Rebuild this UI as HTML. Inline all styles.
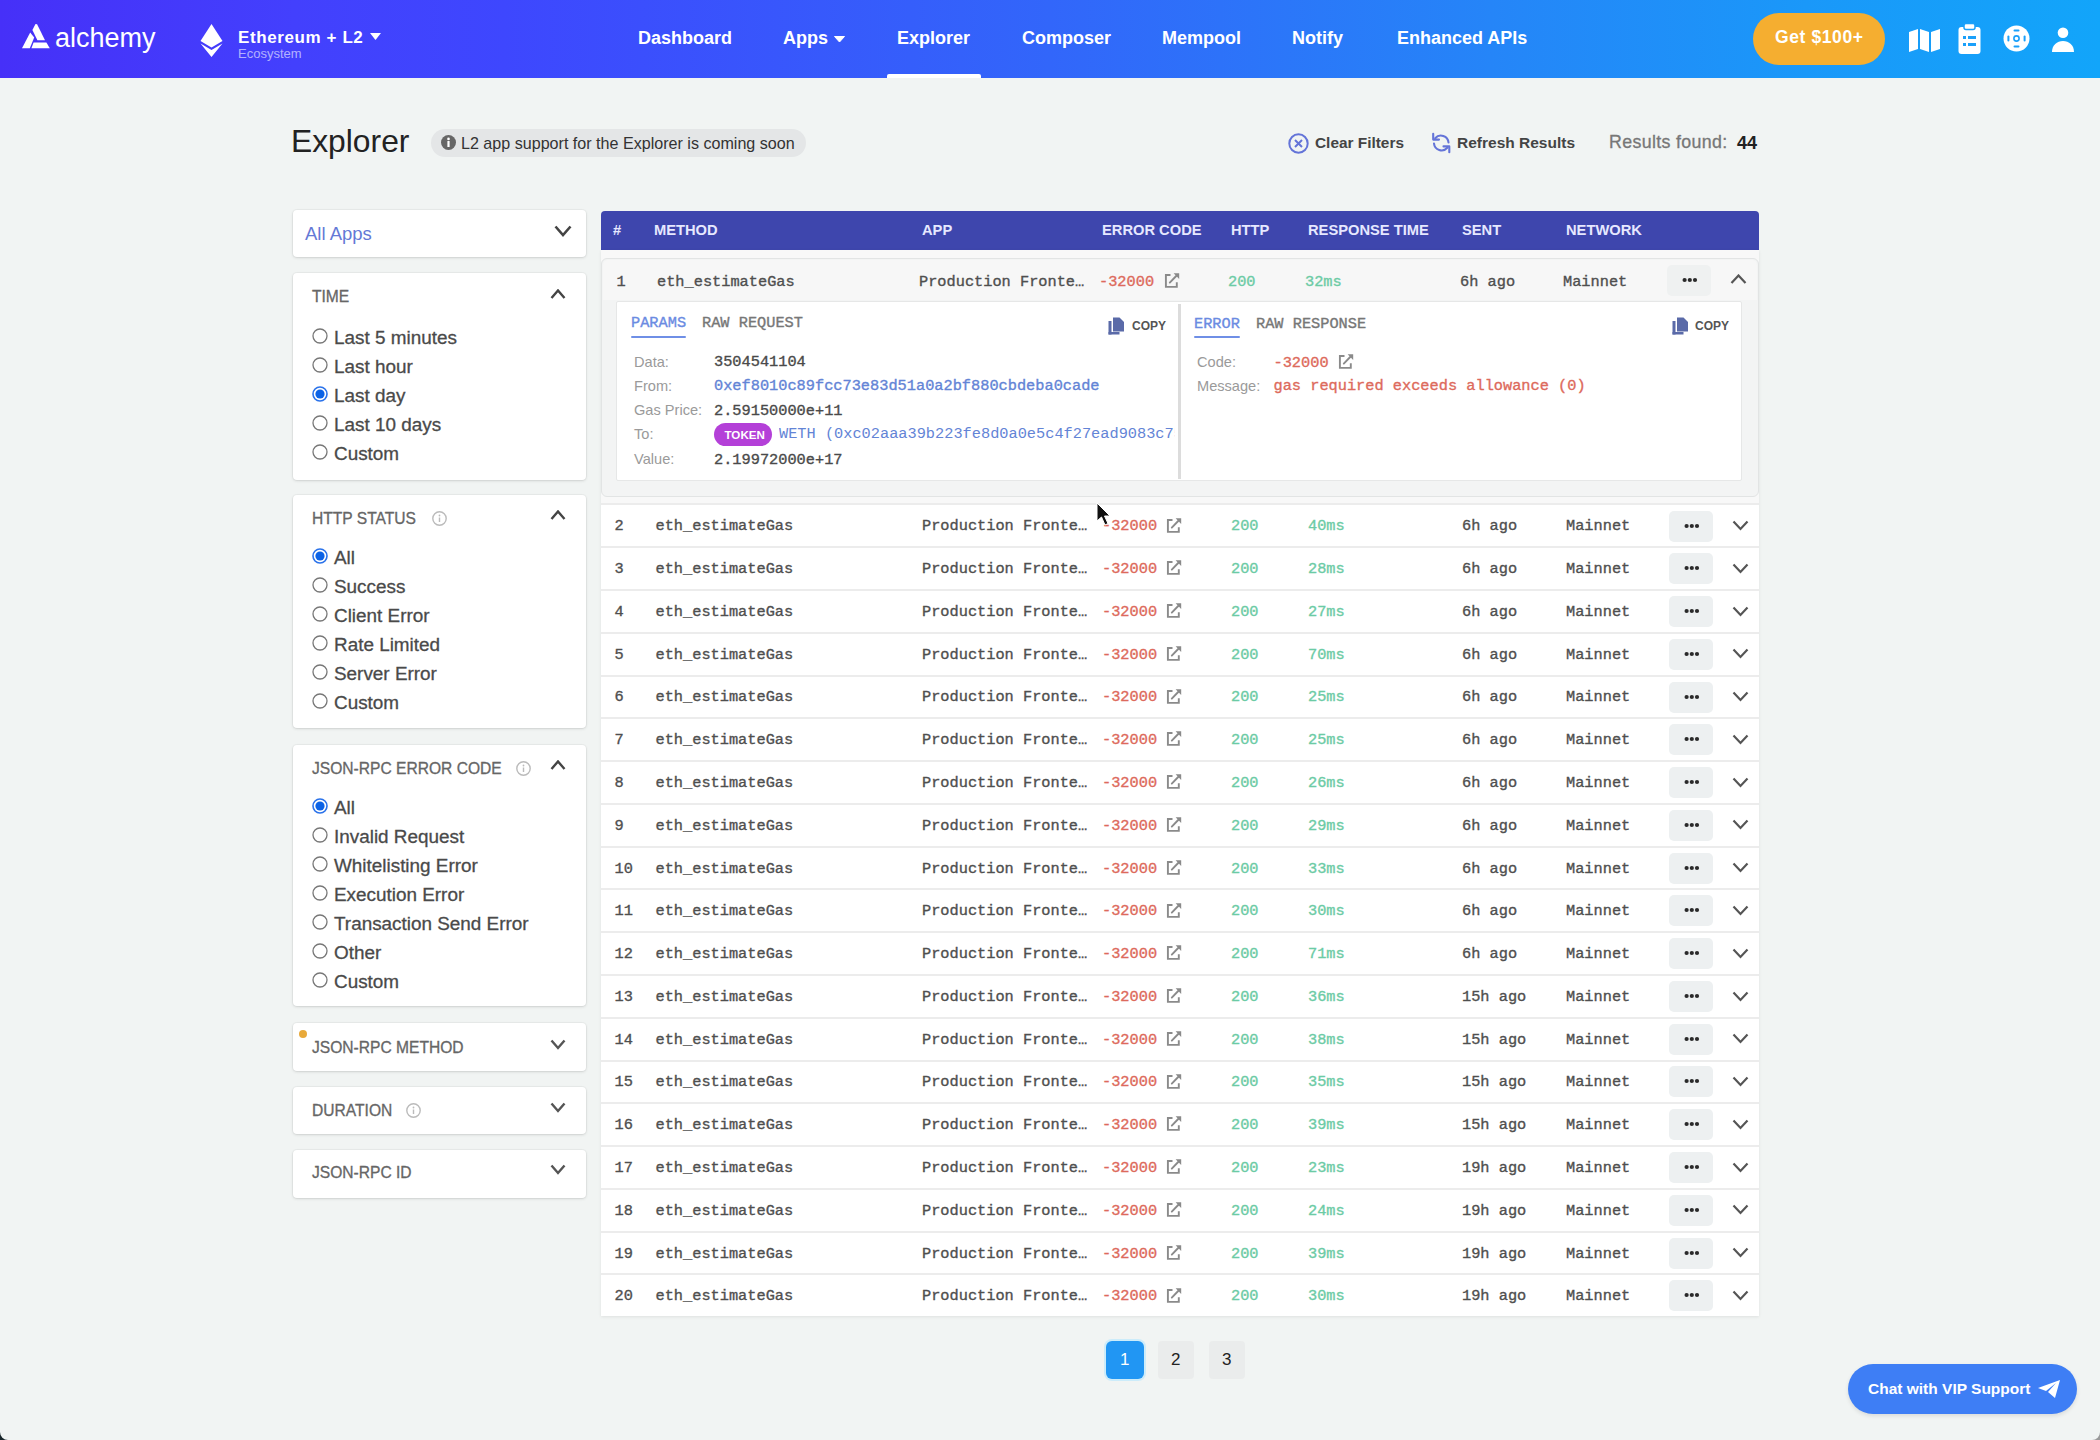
<!DOCTYPE html>
<html><head><meta charset="utf-8"><style>
html,body{margin:0;padding:0;}
body{width:2100px;height:1440px;position:relative;overflow:hidden;background:#f1f4f3;font-family:"Liberation Sans", sans-serif;}
.b{position:absolute;}
.t{position:absolute;white-space:nowrap;line-height:1;}
.s{font-family:"Liberation Sans", sans-serif;}
.m{font-family:"Liberation Mono", monospace;-webkit-text-stroke:0.35px currentColor;}
</style></head><body>
<div class="b" style="left:0;top:0;width:2100px;height:78px;background:linear-gradient(90deg,#4630f8 0%,#4340fd 14%,#3e47fe 24%,#3266fa 50%,#2585f8 71%,#1a98f9 86%,#12a5fa 100%);"></div>
<svg class="b" style="left:21px;top:23px" width="30" height="27" viewBox="0 0 30 27">
<path d="M11.4 6.9 L14.5 1.1 L16.1 1.3 L24 17.2 L16.4 17.2 Z" fill="#fff"/>
<path d="M9.2 9.6 L13.2 14.6 L8.8 25.2 L1 25.2 Z" fill="#fff"/>
<path d="M12.6 19.6 L25.4 19.6 L28.8 25.2 L10.4 25.2 Z" fill="#fff"/>
</svg>
<div class="t s" style="left:55.0px;top:25.1px;font-size:27px;color:#fff;font-weight:400;">alchemy</div>
<svg class="b" style="left:200px;top:24px" width="23" height="33" viewBox="0 0 23 33">
<path d="M11.5 0 L22.5 17 L11.5 23.5 L0.5 17 Z" fill="#fff"/>
<path d="M0.5 19.5 L11.5 26 L22.5 19.5 L11.5 33 Z" fill="#fff"/>
</svg>
<div class="t s" style="left:238.0px;top:29.4px;font-size:17px;color:#fff;font-weight:700;letter-spacing:0.6px">Ethereum + L2</div>
<svg class="b" style="left:370px;top:33px" width="11" height="7" viewBox="0 0 11 7"><path d="M0 0 H11 L5.5 7 Z" fill="#fff"/></svg>
<div class="t s" style="left:238.0px;top:47.0px;font-size:13px;color:rgba(255,255,255,0.6);font-weight:400;">Ecosystem</div>
<div class="t s" style="left:638.0px;top:28.8px;font-size:18px;color:#fff;font-weight:700;">Dashboard</div>
<div class="t s" style="left:783.0px;top:28.8px;font-size:18px;color:#fff;font-weight:700;">Apps</div>
<div class="t s" style="left:897.0px;top:28.8px;font-size:18px;color:#fff;font-weight:700;">Explorer</div>
<div class="t s" style="left:1022.0px;top:28.8px;font-size:18px;color:#fff;font-weight:700;">Composer</div>
<div class="t s" style="left:1162.0px;top:28.8px;font-size:18px;color:#fff;font-weight:700;">Mempool</div>
<div class="t s" style="left:1292.0px;top:28.8px;font-size:18px;color:#fff;font-weight:700;">Notify</div>
<div class="t s" style="left:1397.0px;top:28.8px;font-size:18px;color:#fff;font-weight:700;">Enhanced APIs</div>
<svg class="b" style="left:834px;top:36px" width="11" height="7" viewBox="0 0 11 7"><path d="M0.5 0.5 H10.5 L5.5 6 Z" fill="#fff" stroke="#fff" stroke-width="1" stroke-linejoin="round"/></svg>
<div class="b" style="left:887px;top:74px;width:94px;height:4px;background:#fff;border-radius:2px 2px 0 0"></div>
<div class="b" style="left:1753px;top:13px;width:132px;height:52px;background:#f5ae30;border-radius:26px"></div>
<div class="t s" style="left:1775.0px;top:28.7px;font-size:17.5px;color:#fff;font-weight:700;letter-spacing:0.6px">Get $100+</div>
<svg class="b" style="left:1909px;top:28px" width="32" height="25" viewBox="0 0 32 25">
<path d="M0 4 L9 1 L9 21 L0 24 Z M11 1 L20 4 L20 24 L11 21 Z M22 4 L31 1 L31 21 L22 24 Z" fill="#fff"/>
</svg>
<svg class="b" style="left:1958px;top:23px" width="23" height="31" viewBox="0 0 23 31">
<rect x="0.5" y="4" width="22" height="27" rx="3" fill="#fff"/>
<rect x="6" y="0.5" width="11" height="6" rx="2" fill="#fff" stroke="#1aa0fa" stroke-width="1.5"/>
<rect x="5" y="13" width="3" height="3" fill="#1aa0fa"/><rect x="10" y="13" width="8" height="3" fill="#1aa0fa"/>
<rect x="5" y="20" width="3" height="3" fill="#1aa0fa"/><rect x="10" y="20" width="8" height="3" fill="#1aa0fa"/>
</svg>
<svg class="b" style="left:2003px;top:25px" width="27" height="27" viewBox="0 0 27 27">
<circle cx="13.5" cy="13.5" r="13" fill="#fff"/>
<circle cx="13.5" cy="13.5" r="2.6" fill="none" stroke="#1aa0fa" stroke-width="1.6"/>
<rect x="10.5" y="4.4" width="6" height="2" rx="1" fill="#1aa0fa"/><rect x="10.5" y="20.6" width="6" height="2" rx="1" fill="#1aa0fa"/>
<rect x="4.4" y="10.5" width="2" height="6" rx="1" fill="#1aa0fa"/><rect x="20.6" y="10.5" width="2" height="6" rx="1" fill="#1aa0fa"/>
</svg>
<svg class="b" style="left:2051px;top:27px" width="24" height="25" viewBox="0 0 24 25">
<circle cx="12" cy="5.8" r="5.3" fill="#fff"/>
<path d="M1 25 C1 18 6 14 12 14 C18 14 23 18 23 25 Z" fill="#fff"/>
</svg>
<div class="t s" style="left:291.0px;top:126.1px;font-size:31.8px;color:#222;font-weight:400;">Explorer</div>
<div class="b" style="left:431px;top:129px;width:375px;height:28px;background:#e4e6e7;border-radius:14px"></div>
<svg class="b" style="left:441px;top:135px" width="15" height="15" viewBox="0 0 15 15"><circle cx="7.5" cy="7.5" r="7.5" fill="#666"/><rect x="6.4" y="6" width="2.2" height="6" fill="#fff"/><circle cx="7.5" cy="3.9" r="1.3" fill="#fff"/></svg>
<div class="t s" style="left:461.0px;top:135.4px;font-size:16.1px;color:#333;font-weight:400;">L2 app support for the Explorer is coming soon</div>
<svg class="b" style="left:1288px;top:133px" width="21" height="21" viewBox="0 0 21 21"><circle cx="10.5" cy="10.5" r="9.2" fill="none" stroke="#6474d8" stroke-width="2"/><path d="M7 7 L14 14 M14 7 L7 14" stroke="#6474d8" stroke-width="2"/></svg>
<div class="t s" style="left:1315.0px;top:135.0px;font-size:15.4px;color:#444;font-weight:700;">Clear Filters</div>
<svg class="b" style="left:1431px;top:132px" width="21" height="22" viewBox="0 0 21 22"><g fill="none" stroke="#6474d8" stroke-width="2.1" stroke-linecap="round" stroke-linejoin="round"><path d="M17.5 10.5 A7.6 7.6 0 0 0 4.2 6.2"/><path d="M2.2 1.8 V7.6 H8"/><path d="M3 11.5 A7.6 7.6 0 0 0 16.3 15.8"/><path d="M18.3 20.2 V14.4 H12.5"/></g></svg>
<div class="t s" style="left:1457.0px;top:134.9px;font-size:15.5px;color:#444;font-weight:700;">Refresh Results</div>
<div class="t s" style="left:1609.0px;top:133.7px;font-size:17.8px;color:#777;font-weight:400;letter-spacing:0.35px;-webkit-text-stroke:0.3px currentColor">Results found:</div>
<div class="t s" style="left:1737.0px;top:133.6px;font-size:18px;color:#222;font-weight:700;">44</div>
<div class="b" style="left:293px;top:210px;width:293px;height:47px;background:#fff;border-radius:4px;box-shadow:0 1px 3px rgba(0,0,0,0.12),0 0 0 1px rgba(0,0,0,0.03)"></div>
<div class="t s" style="left:305.0px;top:225.3px;font-size:18.5px;color:#6479d6;font-weight:400;">All Apps</div>
<svg class="b" style="left:554px;top:225px" width="18" height="12" viewBox="0 0 18 12"><path d="M1.5 1.5 L9.0 10 L16.5 1.5" fill="none" stroke="#444" stroke-width="2.6"/></svg>
<div class="b" style="left:293px;top:273px;width:293px;height:207px;background:#fff;border-radius:4px;box-shadow:0 1px 3px rgba(0,0,0,0.12),0 0 0 1px rgba(0,0,0,0.03)"></div>
<div class="t s" style="left:312.0px;top:289.3px;font-size:15.6px;color:#666;font-weight:400;-webkit-text-stroke:0.3px currentColor">TIME</div>
<svg class="b" style="left:550px;top:288.5px" width="16" height="11" viewBox="0 0 16 11"><path d="M1.5 9 L8.0 1.5 L14.5 9" fill="none" stroke="#444" stroke-width="2.4"/></svg>
<svg class="b" style="left:312px;top:327.5px" width="16" height="16" viewBox="0 0 16 16"><circle cx="8" cy="8" r="7" fill="#fff" stroke="#777" stroke-width="1.3"/></svg>
<div class="t s" style="left:334.0px;top:328.6px;font-size:18.9px;color:#4a4a4a;font-weight:400;-webkit-text-stroke:0.3px currentColor">Last 5 minutes</div>
<svg class="b" style="left:312px;top:356.5px" width="16" height="16" viewBox="0 0 16 16"><circle cx="8" cy="8" r="7" fill="#fff" stroke="#777" stroke-width="1.3"/></svg>
<div class="t s" style="left:334.0px;top:357.6px;font-size:18.9px;color:#4a4a4a;font-weight:400;-webkit-text-stroke:0.3px currentColor">Last hour</div>
<svg class="b" style="left:312px;top:385.5px" width="16" height="16" viewBox="0 0 16 16"><circle cx="8" cy="8" r="7" fill="#fff" stroke="#2a72ea" stroke-width="1.6"/><circle cx="8" cy="8" r="4.6" fill="#0b62e6"/></svg>
<div class="t s" style="left:334.0px;top:386.6px;font-size:18.9px;color:#4a4a4a;font-weight:400;-webkit-text-stroke:0.3px currentColor">Last day</div>
<svg class="b" style="left:312px;top:414.5px" width="16" height="16" viewBox="0 0 16 16"><circle cx="8" cy="8" r="7" fill="#fff" stroke="#777" stroke-width="1.3"/></svg>
<div class="t s" style="left:334.0px;top:415.6px;font-size:18.9px;color:#4a4a4a;font-weight:400;-webkit-text-stroke:0.3px currentColor">Last 10 days</div>
<svg class="b" style="left:312px;top:443.5px" width="16" height="16" viewBox="0 0 16 16"><circle cx="8" cy="8" r="7" fill="#fff" stroke="#777" stroke-width="1.3"/></svg>
<div class="t s" style="left:334.0px;top:444.6px;font-size:18.9px;color:#4a4a4a;font-weight:400;-webkit-text-stroke:0.3px currentColor">Custom</div>
<div class="b" style="left:293px;top:495px;width:293px;height:233px;background:#fff;border-radius:4px;box-shadow:0 1px 3px rgba(0,0,0,0.12),0 0 0 1px rgba(0,0,0,0.03)"></div>
<div class="t s" style="left:312.0px;top:510.8px;font-size:15.6px;color:#666;font-weight:400;-webkit-text-stroke:0.3px currentColor">HTTP STATUS</div>
<svg class="b" style="left:432px;top:511.0px" width="15" height="15" viewBox="0 0 15 15"><circle cx="7.5" cy="7.5" r="6.7" fill="none" stroke="#bbb" stroke-width="1.4"/><rect x="6.8" y="6.5" width="1.4" height="4.5" fill="#bbb"/><circle cx="7.5" cy="4.5" r="0.9" fill="#bbb"/></svg>
<svg class="b" style="left:550px;top:510px" width="16" height="11" viewBox="0 0 16 11"><path d="M1.5 9 L8.0 1.5 L14.5 9" fill="none" stroke="#444" stroke-width="2.4"/></svg>
<svg class="b" style="left:312px;top:548.0px" width="16" height="16" viewBox="0 0 16 16"><circle cx="8" cy="8" r="7" fill="#fff" stroke="#2a72ea" stroke-width="1.6"/><circle cx="8" cy="8" r="4.6" fill="#0b62e6"/></svg>
<div class="t s" style="left:334.0px;top:549.1px;font-size:18.9px;color:#4a4a4a;font-weight:400;-webkit-text-stroke:0.3px currentColor">All</div>
<svg class="b" style="left:312px;top:577.0px" width="16" height="16" viewBox="0 0 16 16"><circle cx="8" cy="8" r="7" fill="#fff" stroke="#777" stroke-width="1.3"/></svg>
<div class="t s" style="left:334.0px;top:578.1px;font-size:18.9px;color:#4a4a4a;font-weight:400;-webkit-text-stroke:0.3px currentColor">Success</div>
<svg class="b" style="left:312px;top:606.0px" width="16" height="16" viewBox="0 0 16 16"><circle cx="8" cy="8" r="7" fill="#fff" stroke="#777" stroke-width="1.3"/></svg>
<div class="t s" style="left:334.0px;top:607.1px;font-size:18.9px;color:#4a4a4a;font-weight:400;-webkit-text-stroke:0.3px currentColor">Client Error</div>
<svg class="b" style="left:312px;top:635.0px" width="16" height="16" viewBox="0 0 16 16"><circle cx="8" cy="8" r="7" fill="#fff" stroke="#777" stroke-width="1.3"/></svg>
<div class="t s" style="left:334.0px;top:636.1px;font-size:18.9px;color:#4a4a4a;font-weight:400;-webkit-text-stroke:0.3px currentColor">Rate Limited</div>
<svg class="b" style="left:312px;top:664.0px" width="16" height="16" viewBox="0 0 16 16"><circle cx="8" cy="8" r="7" fill="#fff" stroke="#777" stroke-width="1.3"/></svg>
<div class="t s" style="left:334.0px;top:665.1px;font-size:18.9px;color:#4a4a4a;font-weight:400;-webkit-text-stroke:0.3px currentColor">Server Error</div>
<svg class="b" style="left:312px;top:693.0px" width="16" height="16" viewBox="0 0 16 16"><circle cx="8" cy="8" r="7" fill="#fff" stroke="#777" stroke-width="1.3"/></svg>
<div class="t s" style="left:334.0px;top:694.1px;font-size:18.9px;color:#4a4a4a;font-weight:400;-webkit-text-stroke:0.3px currentColor">Custom</div>
<div class="b" style="left:293px;top:745px;width:293px;height:261px;background:#fff;border-radius:4px;box-shadow:0 1px 3px rgba(0,0,0,0.12),0 0 0 1px rgba(0,0,0,0.03)"></div>
<div class="t s" style="left:312.0px;top:760.8px;font-size:15.6px;color:#666;font-weight:400;-webkit-text-stroke:0.3px currentColor">JSON-RPC ERROR CODE</div>
<svg class="b" style="left:516px;top:761.0px" width="15" height="15" viewBox="0 0 15 15"><circle cx="7.5" cy="7.5" r="6.7" fill="none" stroke="#bbb" stroke-width="1.4"/><rect x="6.8" y="6.5" width="1.4" height="4.5" fill="#bbb"/><circle cx="7.5" cy="4.5" r="0.9" fill="#bbb"/></svg>
<svg class="b" style="left:550px;top:760px" width="16" height="11" viewBox="0 0 16 11"><path d="M1.5 9 L8.0 1.5 L14.5 9" fill="none" stroke="#444" stroke-width="2.4"/></svg>
<svg class="b" style="left:312px;top:797.5px" width="16" height="16" viewBox="0 0 16 16"><circle cx="8" cy="8" r="7" fill="#fff" stroke="#2a72ea" stroke-width="1.6"/><circle cx="8" cy="8" r="4.6" fill="#0b62e6"/></svg>
<div class="t s" style="left:334.0px;top:798.6px;font-size:18.9px;color:#4a4a4a;font-weight:400;-webkit-text-stroke:0.3px currentColor">All</div>
<svg class="b" style="left:312px;top:826.5px" width="16" height="16" viewBox="0 0 16 16"><circle cx="8" cy="8" r="7" fill="#fff" stroke="#777" stroke-width="1.3"/></svg>
<div class="t s" style="left:334.0px;top:827.6px;font-size:18.9px;color:#4a4a4a;font-weight:400;-webkit-text-stroke:0.3px currentColor">Invalid Request</div>
<svg class="b" style="left:312px;top:855.5px" width="16" height="16" viewBox="0 0 16 16"><circle cx="8" cy="8" r="7" fill="#fff" stroke="#777" stroke-width="1.3"/></svg>
<div class="t s" style="left:334.0px;top:856.6px;font-size:18.9px;color:#4a4a4a;font-weight:400;-webkit-text-stroke:0.3px currentColor">Whitelisting Error</div>
<svg class="b" style="left:312px;top:884.5px" width="16" height="16" viewBox="0 0 16 16"><circle cx="8" cy="8" r="7" fill="#fff" stroke="#777" stroke-width="1.3"/></svg>
<div class="t s" style="left:334.0px;top:885.6px;font-size:18.9px;color:#4a4a4a;font-weight:400;-webkit-text-stroke:0.3px currentColor">Execution Error</div>
<svg class="b" style="left:312px;top:913.5px" width="16" height="16" viewBox="0 0 16 16"><circle cx="8" cy="8" r="7" fill="#fff" stroke="#777" stroke-width="1.3"/></svg>
<div class="t s" style="left:334.0px;top:914.6px;font-size:18.9px;color:#4a4a4a;font-weight:400;-webkit-text-stroke:0.3px currentColor">Transaction Send Error</div>
<svg class="b" style="left:312px;top:942.5px" width="16" height="16" viewBox="0 0 16 16"><circle cx="8" cy="8" r="7" fill="#fff" stroke="#777" stroke-width="1.3"/></svg>
<div class="t s" style="left:334.0px;top:943.6px;font-size:18.9px;color:#4a4a4a;font-weight:400;-webkit-text-stroke:0.3px currentColor">Other</div>
<svg class="b" style="left:312px;top:971.5px" width="16" height="16" viewBox="0 0 16 16"><circle cx="8" cy="8" r="7" fill="#fff" stroke="#777" stroke-width="1.3"/></svg>
<div class="t s" style="left:334.0px;top:972.6px;font-size:18.9px;color:#4a4a4a;font-weight:400;-webkit-text-stroke:0.3px currentColor">Custom</div>
<div class="b" style="left:293px;top:1023px;width:293px;height:48px;background:#fff;border-radius:4px;box-shadow:0 1px 3px rgba(0,0,0,0.12),0 0 0 1px rgba(0,0,0,0.03)"></div>
<div class="t s" style="left:312.0px;top:1040.2px;font-size:15.6px;color:#666;font-weight:400;-webkit-text-stroke:0.3px currentColor">JSON-RPC METHOD</div>
<svg class="b" style="left:550px;top:1039.4px" width="16" height="11" viewBox="0 0 16 11"><path d="M1.5 1.5 L8.0 9 L14.5 1.5" fill="none" stroke="#555" stroke-width="2.4"/></svg>
<div class="b" style="left:299px;top:1030px;width:8px;height:8px;border-radius:50%;background:#e8a93a"></div>
<div class="b" style="left:293px;top:1087px;width:293px;height:47px;background:#fff;border-radius:4px;box-shadow:0 1px 3px rgba(0,0,0,0.12),0 0 0 1px rgba(0,0,0,0.03)"></div>
<div class="t s" style="left:312.0px;top:1102.8px;font-size:15.6px;color:#666;font-weight:400;-webkit-text-stroke:0.3px currentColor">DURATION</div>
<svg class="b" style="left:406px;top:1103.0px" width="15" height="15" viewBox="0 0 15 15"><circle cx="7.5" cy="7.5" r="6.7" fill="none" stroke="#bbb" stroke-width="1.4"/><rect x="6.8" y="6.5" width="1.4" height="4.5" fill="#bbb"/><circle cx="7.5" cy="4.5" r="0.9" fill="#bbb"/></svg>
<svg class="b" style="left:550px;top:1102px" width="16" height="11" viewBox="0 0 16 11"><path d="M1.5 1.5 L8.0 9 L14.5 1.5" fill="none" stroke="#555" stroke-width="2.4"/></svg>
<div class="b" style="left:293px;top:1150px;width:293px;height:48px;background:#fff;border-radius:4px;box-shadow:0 1px 3px rgba(0,0,0,0.12),0 0 0 1px rgba(0,0,0,0.03)"></div>
<div class="t s" style="left:312.0px;top:1165.2px;font-size:15.6px;color:#666;font-weight:400;-webkit-text-stroke:0.3px currentColor">JSON-RPC ID</div>
<svg class="b" style="left:550px;top:1164.4px" width="16" height="11" viewBox="0 0 16 11"><path d="M1.5 1.5 L8.0 9 L14.5 1.5" fill="none" stroke="#555" stroke-width="2.4"/></svg>
<div class="b" style="left:601px;top:211px;width:1158px;height:39px;background:#3e46ad;border-radius:4px 4px 0 0"></div>
<div class="t s" style="left:613.0px;top:222.6px;font-size:14.7px;color:#e6e8ff;font-weight:700;">#</div>
<div class="t s" style="left:654.0px;top:222.6px;font-size:14.7px;color:#e6e8ff;font-weight:700;">METHOD</div>
<div class="t s" style="left:922.0px;top:222.6px;font-size:14.7px;color:#e6e8ff;font-weight:700;">APP</div>
<div class="t s" style="left:1102.0px;top:222.6px;font-size:14.7px;color:#e6e8ff;font-weight:700;">ERROR CODE</div>
<div class="t s" style="left:1231.0px;top:222.6px;font-size:14.7px;color:#e6e8ff;font-weight:700;">HTTP</div>
<div class="t s" style="left:1308.0px;top:222.6px;font-size:14.7px;color:#e6e8ff;font-weight:700;">RESPONSE TIME</div>
<div class="t s" style="left:1462.0px;top:222.6px;font-size:14.7px;color:#e6e8ff;font-weight:700;">SENT</div>
<div class="t s" style="left:1566.0px;top:222.6px;font-size:14.7px;color:#e6e8ff;font-weight:700;">NETWORK</div>
<div class="b" style="left:601px;top:250px;width:1158px;height:1066px;background:#fff;box-shadow:0 1px 3px rgba(0,0,0,0.08)"></div>
<div class="b" style="left:601px;top:250px;width:1158px;height:254px;background:#f8f8f8"></div>
<div class="b" style="left:601px;top:503px;width:1158px;height:2px;background:#ececec"></div>
<div class="b" style="left:601px;top:546.4px;width:1158px;height:2px;background:#ececec"></div>
<div class="t m" style="left:614.5px;top:519.3px;font-size:15.3px;color:#4f4f4f;font-weight:400;">2</div>
<div class="t m" style="left:655.5px;top:519.3px;font-size:15.3px;color:#4f4f4f;font-weight:400;">eth_estimateGas</div>
<div class="t m" style="left:922.0px;top:519.3px;font-size:15.3px;color:#4f4f4f;font-weight:400;">Production Fronte…</div>
<div class="t m" style="left:1102.0px;top:519.3px;font-size:15.3px;color:#dd6a5c;font-weight:400;">-32000</div>
<svg class="b" style="left:1166px;top:517.5px" width="16" height="16" viewBox="0 0 16 16"><path d="M6.5 2 H1.9 V13.9 H12.8 V9.2" fill="none" stroke="#8a8a8a" stroke-width="1.9"/><path d="M5.8 9.6 L12.2 3" stroke="#8a8a8a" stroke-width="1.9" stroke-linecap="round"/><path d="M9.6 0.3 H15.2 V5.9 Z" fill="#8a8a8a"/></svg>
<div class="t m" style="left:1231.0px;top:519.3px;font-size:15.3px;color:#6ccba5;font-weight:400;">200</div>
<div class="t m" style="left:1308.0px;top:519.3px;font-size:15.3px;color:#6ccba5;font-weight:400;">40ms</div>
<div class="t m" style="left:1462.0px;top:519.3px;font-size:15.3px;color:#4f4f4f;font-weight:400;">6h ago</div>
<div class="t m" style="left:1566.0px;top:519.3px;font-size:15.3px;color:#4f4f4f;font-weight:400;">Mainnet</div>
<div class="b" style="left:1669px;top:511px;width:44px;height:31px;background:#edf0f1;border-radius:5px"></div><svg class="b" style="left:1683.5px;top:523px" width="16" height="6" viewBox="0 0 16 6"><circle cx="2.6" cy="3" r="2.1" fill="#2a2a2a"/><circle cx="7.8" cy="3" r="2.1" fill="#2a2a2a"/><circle cx="13" cy="3" r="2.1" fill="#2a2a2a"/></svg>
<svg class="b" style="left:1732px;top:520.0px" width="17" height="11" viewBox="0 0 17 11"><path d="M1.5 1.5 L8.5 9 L15.5 1.5" fill="none" stroke="#555" stroke-width="2.2"/></svg>
<div class="b" style="left:601px;top:589.1px;width:1158px;height:2px;background:#ececec"></div>
<div class="t m" style="left:614.5px;top:562.1px;font-size:15.3px;color:#4f4f4f;font-weight:400;">3</div>
<div class="t m" style="left:655.5px;top:562.1px;font-size:15.3px;color:#4f4f4f;font-weight:400;">eth_estimateGas</div>
<div class="t m" style="left:922.0px;top:562.1px;font-size:15.3px;color:#4f4f4f;font-weight:400;">Production Fronte…</div>
<div class="t m" style="left:1102.0px;top:562.1px;font-size:15.3px;color:#dd6a5c;font-weight:400;">-32000</div>
<svg class="b" style="left:1166px;top:560.28px" width="16" height="16" viewBox="0 0 16 16"><path d="M6.5 2 H1.9 V13.9 H12.8 V9.2" fill="none" stroke="#8a8a8a" stroke-width="1.9"/><path d="M5.8 9.6 L12.2 3" stroke="#8a8a8a" stroke-width="1.9" stroke-linecap="round"/><path d="M9.6 0.3 H15.2 V5.9 Z" fill="#8a8a8a"/></svg>
<div class="t m" style="left:1231.0px;top:562.1px;font-size:15.3px;color:#6ccba5;font-weight:400;">200</div>
<div class="t m" style="left:1308.0px;top:562.1px;font-size:15.3px;color:#6ccba5;font-weight:400;">28ms</div>
<div class="t m" style="left:1462.0px;top:562.1px;font-size:15.3px;color:#4f4f4f;font-weight:400;">6h ago</div>
<div class="t m" style="left:1566.0px;top:562.1px;font-size:15.3px;color:#4f4f4f;font-weight:400;">Mainnet</div>
<div class="b" style="left:1669px;top:553px;width:44px;height:31px;background:#edf0f1;border-radius:5px"></div><svg class="b" style="left:1683.5px;top:565px" width="16" height="6" viewBox="0 0 16 6"><circle cx="2.6" cy="3" r="2.1" fill="#2a2a2a"/><circle cx="7.8" cy="3" r="2.1" fill="#2a2a2a"/><circle cx="13" cy="3" r="2.1" fill="#2a2a2a"/></svg>
<svg class="b" style="left:1732px;top:562.78px" width="17" height="11" viewBox="0 0 17 11"><path d="M1.5 1.5 L8.5 9 L15.5 1.5" fill="none" stroke="#555" stroke-width="2.2"/></svg>
<div class="b" style="left:601px;top:631.9px;width:1158px;height:2px;background:#ececec"></div>
<div class="t m" style="left:614.5px;top:604.8px;font-size:15.3px;color:#4f4f4f;font-weight:400;">4</div>
<div class="t m" style="left:655.5px;top:604.8px;font-size:15.3px;color:#4f4f4f;font-weight:400;">eth_estimateGas</div>
<div class="t m" style="left:922.0px;top:604.8px;font-size:15.3px;color:#4f4f4f;font-weight:400;">Production Fronte…</div>
<div class="t m" style="left:1102.0px;top:604.8px;font-size:15.3px;color:#dd6a5c;font-weight:400;">-32000</div>
<svg class="b" style="left:1166px;top:603.06px" width="16" height="16" viewBox="0 0 16 16"><path d="M6.5 2 H1.9 V13.9 H12.8 V9.2" fill="none" stroke="#8a8a8a" stroke-width="1.9"/><path d="M5.8 9.6 L12.2 3" stroke="#8a8a8a" stroke-width="1.9" stroke-linecap="round"/><path d="M9.6 0.3 H15.2 V5.9 Z" fill="#8a8a8a"/></svg>
<div class="t m" style="left:1231.0px;top:604.8px;font-size:15.3px;color:#6ccba5;font-weight:400;">200</div>
<div class="t m" style="left:1308.0px;top:604.8px;font-size:15.3px;color:#6ccba5;font-weight:400;">27ms</div>
<div class="t m" style="left:1462.0px;top:604.8px;font-size:15.3px;color:#4f4f4f;font-weight:400;">6h ago</div>
<div class="t m" style="left:1566.0px;top:604.8px;font-size:15.3px;color:#4f4f4f;font-weight:400;">Mainnet</div>
<div class="b" style="left:1669px;top:596px;width:44px;height:31px;background:#edf0f1;border-radius:5px"></div><svg class="b" style="left:1683.5px;top:608px" width="16" height="6" viewBox="0 0 16 6"><circle cx="2.6" cy="3" r="2.1" fill="#2a2a2a"/><circle cx="7.8" cy="3" r="2.1" fill="#2a2a2a"/><circle cx="13" cy="3" r="2.1" fill="#2a2a2a"/></svg>
<svg class="b" style="left:1732px;top:605.56px" width="17" height="11" viewBox="0 0 17 11"><path d="M1.5 1.5 L8.5 9 L15.5 1.5" fill="none" stroke="#555" stroke-width="2.2"/></svg>
<div class="b" style="left:601px;top:674.6px;width:1158px;height:2px;background:#ececec"></div>
<div class="t m" style="left:614.5px;top:647.6px;font-size:15.3px;color:#4f4f4f;font-weight:400;">5</div>
<div class="t m" style="left:655.5px;top:647.6px;font-size:15.3px;color:#4f4f4f;font-weight:400;">eth_estimateGas</div>
<div class="t m" style="left:922.0px;top:647.6px;font-size:15.3px;color:#4f4f4f;font-weight:400;">Production Fronte…</div>
<div class="t m" style="left:1102.0px;top:647.6px;font-size:15.3px;color:#dd6a5c;font-weight:400;">-32000</div>
<svg class="b" style="left:1166px;top:645.84px" width="16" height="16" viewBox="0 0 16 16"><path d="M6.5 2 H1.9 V13.9 H12.8 V9.2" fill="none" stroke="#8a8a8a" stroke-width="1.9"/><path d="M5.8 9.6 L12.2 3" stroke="#8a8a8a" stroke-width="1.9" stroke-linecap="round"/><path d="M9.6 0.3 H15.2 V5.9 Z" fill="#8a8a8a"/></svg>
<div class="t m" style="left:1231.0px;top:647.6px;font-size:15.3px;color:#6ccba5;font-weight:400;">200</div>
<div class="t m" style="left:1308.0px;top:647.6px;font-size:15.3px;color:#6ccba5;font-weight:400;">70ms</div>
<div class="t m" style="left:1462.0px;top:647.6px;font-size:15.3px;color:#4f4f4f;font-weight:400;">6h ago</div>
<div class="t m" style="left:1566.0px;top:647.6px;font-size:15.3px;color:#4f4f4f;font-weight:400;">Mainnet</div>
<div class="b" style="left:1669px;top:639px;width:44px;height:31px;background:#edf0f1;border-radius:5px"></div><svg class="b" style="left:1683.5px;top:651px" width="16" height="6" viewBox="0 0 16 6"><circle cx="2.6" cy="3" r="2.1" fill="#2a2a2a"/><circle cx="7.8" cy="3" r="2.1" fill="#2a2a2a"/><circle cx="13" cy="3" r="2.1" fill="#2a2a2a"/></svg>
<svg class="b" style="left:1732px;top:648.34px" width="17" height="11" viewBox="0 0 17 11"><path d="M1.5 1.5 L8.5 9 L15.5 1.5" fill="none" stroke="#555" stroke-width="2.2"/></svg>
<div class="b" style="left:601px;top:717.4px;width:1158px;height:2px;background:#ececec"></div>
<div class="t m" style="left:614.5px;top:690.4px;font-size:15.3px;color:#4f4f4f;font-weight:400;">6</div>
<div class="t m" style="left:655.5px;top:690.4px;font-size:15.3px;color:#4f4f4f;font-weight:400;">eth_estimateGas</div>
<div class="t m" style="left:922.0px;top:690.4px;font-size:15.3px;color:#4f4f4f;font-weight:400;">Production Fronte…</div>
<div class="t m" style="left:1102.0px;top:690.4px;font-size:15.3px;color:#dd6a5c;font-weight:400;">-32000</div>
<svg class="b" style="left:1166px;top:688.62px" width="16" height="16" viewBox="0 0 16 16"><path d="M6.5 2 H1.9 V13.9 H12.8 V9.2" fill="none" stroke="#8a8a8a" stroke-width="1.9"/><path d="M5.8 9.6 L12.2 3" stroke="#8a8a8a" stroke-width="1.9" stroke-linecap="round"/><path d="M9.6 0.3 H15.2 V5.9 Z" fill="#8a8a8a"/></svg>
<div class="t m" style="left:1231.0px;top:690.4px;font-size:15.3px;color:#6ccba5;font-weight:400;">200</div>
<div class="t m" style="left:1308.0px;top:690.4px;font-size:15.3px;color:#6ccba5;font-weight:400;">25ms</div>
<div class="t m" style="left:1462.0px;top:690.4px;font-size:15.3px;color:#4f4f4f;font-weight:400;">6h ago</div>
<div class="t m" style="left:1566.0px;top:690.4px;font-size:15.3px;color:#4f4f4f;font-weight:400;">Mainnet</div>
<div class="b" style="left:1669px;top:682px;width:44px;height:31px;background:#edf0f1;border-radius:5px"></div><svg class="b" style="left:1683.5px;top:694px" width="16" height="6" viewBox="0 0 16 6"><circle cx="2.6" cy="3" r="2.1" fill="#2a2a2a"/><circle cx="7.8" cy="3" r="2.1" fill="#2a2a2a"/><circle cx="13" cy="3" r="2.1" fill="#2a2a2a"/></svg>
<svg class="b" style="left:1732px;top:691.12px" width="17" height="11" viewBox="0 0 17 11"><path d="M1.5 1.5 L8.5 9 L15.5 1.5" fill="none" stroke="#555" stroke-width="2.2"/></svg>
<div class="b" style="left:601px;top:760.2px;width:1158px;height:2px;background:#ececec"></div>
<div class="t m" style="left:614.5px;top:733.2px;font-size:15.3px;color:#4f4f4f;font-weight:400;">7</div>
<div class="t m" style="left:655.5px;top:733.2px;font-size:15.3px;color:#4f4f4f;font-weight:400;">eth_estimateGas</div>
<div class="t m" style="left:922.0px;top:733.2px;font-size:15.3px;color:#4f4f4f;font-weight:400;">Production Fronte…</div>
<div class="t m" style="left:1102.0px;top:733.2px;font-size:15.3px;color:#dd6a5c;font-weight:400;">-32000</div>
<svg class="b" style="left:1166px;top:731.4px" width="16" height="16" viewBox="0 0 16 16"><path d="M6.5 2 H1.9 V13.9 H12.8 V9.2" fill="none" stroke="#8a8a8a" stroke-width="1.9"/><path d="M5.8 9.6 L12.2 3" stroke="#8a8a8a" stroke-width="1.9" stroke-linecap="round"/><path d="M9.6 0.3 H15.2 V5.9 Z" fill="#8a8a8a"/></svg>
<div class="t m" style="left:1231.0px;top:733.2px;font-size:15.3px;color:#6ccba5;font-weight:400;">200</div>
<div class="t m" style="left:1308.0px;top:733.2px;font-size:15.3px;color:#6ccba5;font-weight:400;">25ms</div>
<div class="t m" style="left:1462.0px;top:733.2px;font-size:15.3px;color:#4f4f4f;font-weight:400;">6h ago</div>
<div class="t m" style="left:1566.0px;top:733.2px;font-size:15.3px;color:#4f4f4f;font-weight:400;">Mainnet</div>
<div class="b" style="left:1669px;top:724px;width:44px;height:31px;background:#edf0f1;border-radius:5px"></div><svg class="b" style="left:1683.5px;top:736px" width="16" height="6" viewBox="0 0 16 6"><circle cx="2.6" cy="3" r="2.1" fill="#2a2a2a"/><circle cx="7.8" cy="3" r="2.1" fill="#2a2a2a"/><circle cx="13" cy="3" r="2.1" fill="#2a2a2a"/></svg>
<svg class="b" style="left:1732px;top:733.9px" width="17" height="11" viewBox="0 0 17 11"><path d="M1.5 1.5 L8.5 9 L15.5 1.5" fill="none" stroke="#555" stroke-width="2.2"/></svg>
<div class="b" style="left:601px;top:802.9px;width:1158px;height:2px;background:#ececec"></div>
<div class="t m" style="left:614.5px;top:776.0px;font-size:15.3px;color:#4f4f4f;font-weight:400;">8</div>
<div class="t m" style="left:655.5px;top:776.0px;font-size:15.3px;color:#4f4f4f;font-weight:400;">eth_estimateGas</div>
<div class="t m" style="left:922.0px;top:776.0px;font-size:15.3px;color:#4f4f4f;font-weight:400;">Production Fronte…</div>
<div class="t m" style="left:1102.0px;top:776.0px;font-size:15.3px;color:#dd6a5c;font-weight:400;">-32000</div>
<svg class="b" style="left:1166px;top:774.1800000000001px" width="16" height="16" viewBox="0 0 16 16"><path d="M6.5 2 H1.9 V13.9 H12.8 V9.2" fill="none" stroke="#8a8a8a" stroke-width="1.9"/><path d="M5.8 9.6 L12.2 3" stroke="#8a8a8a" stroke-width="1.9" stroke-linecap="round"/><path d="M9.6 0.3 H15.2 V5.9 Z" fill="#8a8a8a"/></svg>
<div class="t m" style="left:1231.0px;top:776.0px;font-size:15.3px;color:#6ccba5;font-weight:400;">200</div>
<div class="t m" style="left:1308.0px;top:776.0px;font-size:15.3px;color:#6ccba5;font-weight:400;">26ms</div>
<div class="t m" style="left:1462.0px;top:776.0px;font-size:15.3px;color:#4f4f4f;font-weight:400;">6h ago</div>
<div class="t m" style="left:1566.0px;top:776.0px;font-size:15.3px;color:#4f4f4f;font-weight:400;">Mainnet</div>
<div class="b" style="left:1669px;top:767px;width:44px;height:31px;background:#edf0f1;border-radius:5px"></div><svg class="b" style="left:1683.5px;top:779px" width="16" height="6" viewBox="0 0 16 6"><circle cx="2.6" cy="3" r="2.1" fill="#2a2a2a"/><circle cx="7.8" cy="3" r="2.1" fill="#2a2a2a"/><circle cx="13" cy="3" r="2.1" fill="#2a2a2a"/></svg>
<svg class="b" style="left:1732px;top:776.6800000000001px" width="17" height="11" viewBox="0 0 17 11"><path d="M1.5 1.5 L8.5 9 L15.5 1.5" fill="none" stroke="#555" stroke-width="2.2"/></svg>
<div class="b" style="left:601px;top:845.7px;width:1158px;height:2px;background:#ececec"></div>
<div class="t m" style="left:614.5px;top:818.7px;font-size:15.3px;color:#4f4f4f;font-weight:400;">9</div>
<div class="t m" style="left:655.5px;top:818.7px;font-size:15.3px;color:#4f4f4f;font-weight:400;">eth_estimateGas</div>
<div class="t m" style="left:922.0px;top:818.7px;font-size:15.3px;color:#4f4f4f;font-weight:400;">Production Fronte…</div>
<div class="t m" style="left:1102.0px;top:818.7px;font-size:15.3px;color:#dd6a5c;font-weight:400;">-32000</div>
<svg class="b" style="left:1166px;top:816.96px" width="16" height="16" viewBox="0 0 16 16"><path d="M6.5 2 H1.9 V13.9 H12.8 V9.2" fill="none" stroke="#8a8a8a" stroke-width="1.9"/><path d="M5.8 9.6 L12.2 3" stroke="#8a8a8a" stroke-width="1.9" stroke-linecap="round"/><path d="M9.6 0.3 H15.2 V5.9 Z" fill="#8a8a8a"/></svg>
<div class="t m" style="left:1231.0px;top:818.7px;font-size:15.3px;color:#6ccba5;font-weight:400;">200</div>
<div class="t m" style="left:1308.0px;top:818.7px;font-size:15.3px;color:#6ccba5;font-weight:400;">29ms</div>
<div class="t m" style="left:1462.0px;top:818.7px;font-size:15.3px;color:#4f4f4f;font-weight:400;">6h ago</div>
<div class="t m" style="left:1566.0px;top:818.7px;font-size:15.3px;color:#4f4f4f;font-weight:400;">Mainnet</div>
<div class="b" style="left:1669px;top:810px;width:44px;height:31px;background:#edf0f1;border-radius:5px"></div><svg class="b" style="left:1683.5px;top:822px" width="16" height="6" viewBox="0 0 16 6"><circle cx="2.6" cy="3" r="2.1" fill="#2a2a2a"/><circle cx="7.8" cy="3" r="2.1" fill="#2a2a2a"/><circle cx="13" cy="3" r="2.1" fill="#2a2a2a"/></svg>
<svg class="b" style="left:1732px;top:819.46px" width="17" height="11" viewBox="0 0 17 11"><path d="M1.5 1.5 L8.5 9 L15.5 1.5" fill="none" stroke="#555" stroke-width="2.2"/></svg>
<div class="b" style="left:601px;top:888.4px;width:1158px;height:2px;background:#ececec"></div>
<div class="t m" style="left:614.5px;top:861.5px;font-size:15.3px;color:#4f4f4f;font-weight:400;">10</div>
<div class="t m" style="left:655.5px;top:861.5px;font-size:15.3px;color:#4f4f4f;font-weight:400;">eth_estimateGas</div>
<div class="t m" style="left:922.0px;top:861.5px;font-size:15.3px;color:#4f4f4f;font-weight:400;">Production Fronte…</div>
<div class="t m" style="left:1102.0px;top:861.5px;font-size:15.3px;color:#dd6a5c;font-weight:400;">-32000</div>
<svg class="b" style="left:1166px;top:859.74px" width="16" height="16" viewBox="0 0 16 16"><path d="M6.5 2 H1.9 V13.9 H12.8 V9.2" fill="none" stroke="#8a8a8a" stroke-width="1.9"/><path d="M5.8 9.6 L12.2 3" stroke="#8a8a8a" stroke-width="1.9" stroke-linecap="round"/><path d="M9.6 0.3 H15.2 V5.9 Z" fill="#8a8a8a"/></svg>
<div class="t m" style="left:1231.0px;top:861.5px;font-size:15.3px;color:#6ccba5;font-weight:400;">200</div>
<div class="t m" style="left:1308.0px;top:861.5px;font-size:15.3px;color:#6ccba5;font-weight:400;">33ms</div>
<div class="t m" style="left:1462.0px;top:861.5px;font-size:15.3px;color:#4f4f4f;font-weight:400;">6h ago</div>
<div class="t m" style="left:1566.0px;top:861.5px;font-size:15.3px;color:#4f4f4f;font-weight:400;">Mainnet</div>
<div class="b" style="left:1669px;top:853px;width:44px;height:31px;background:#edf0f1;border-radius:5px"></div><svg class="b" style="left:1683.5px;top:865px" width="16" height="6" viewBox="0 0 16 6"><circle cx="2.6" cy="3" r="2.1" fill="#2a2a2a"/><circle cx="7.8" cy="3" r="2.1" fill="#2a2a2a"/><circle cx="13" cy="3" r="2.1" fill="#2a2a2a"/></svg>
<svg class="b" style="left:1732px;top:862.24px" width="17" height="11" viewBox="0 0 17 11"><path d="M1.5 1.5 L8.5 9 L15.5 1.5" fill="none" stroke="#555" stroke-width="2.2"/></svg>
<div class="b" style="left:601px;top:931.2px;width:1158px;height:2px;background:#ececec"></div>
<div class="t m" style="left:614.5px;top:904.3px;font-size:15.3px;color:#4f4f4f;font-weight:400;">11</div>
<div class="t m" style="left:655.5px;top:904.3px;font-size:15.3px;color:#4f4f4f;font-weight:400;">eth_estimateGas</div>
<div class="t m" style="left:922.0px;top:904.3px;font-size:15.3px;color:#4f4f4f;font-weight:400;">Production Fronte…</div>
<div class="t m" style="left:1102.0px;top:904.3px;font-size:15.3px;color:#dd6a5c;font-weight:400;">-32000</div>
<svg class="b" style="left:1166px;top:902.52px" width="16" height="16" viewBox="0 0 16 16"><path d="M6.5 2 H1.9 V13.9 H12.8 V9.2" fill="none" stroke="#8a8a8a" stroke-width="1.9"/><path d="M5.8 9.6 L12.2 3" stroke="#8a8a8a" stroke-width="1.9" stroke-linecap="round"/><path d="M9.6 0.3 H15.2 V5.9 Z" fill="#8a8a8a"/></svg>
<div class="t m" style="left:1231.0px;top:904.3px;font-size:15.3px;color:#6ccba5;font-weight:400;">200</div>
<div class="t m" style="left:1308.0px;top:904.3px;font-size:15.3px;color:#6ccba5;font-weight:400;">30ms</div>
<div class="t m" style="left:1462.0px;top:904.3px;font-size:15.3px;color:#4f4f4f;font-weight:400;">6h ago</div>
<div class="t m" style="left:1566.0px;top:904.3px;font-size:15.3px;color:#4f4f4f;font-weight:400;">Mainnet</div>
<div class="b" style="left:1669px;top:895px;width:44px;height:31px;background:#edf0f1;border-radius:5px"></div><svg class="b" style="left:1683.5px;top:907px" width="16" height="6" viewBox="0 0 16 6"><circle cx="2.6" cy="3" r="2.1" fill="#2a2a2a"/><circle cx="7.8" cy="3" r="2.1" fill="#2a2a2a"/><circle cx="13" cy="3" r="2.1" fill="#2a2a2a"/></svg>
<svg class="b" style="left:1732px;top:905.02px" width="17" height="11" viewBox="0 0 17 11"><path d="M1.5 1.5 L8.5 9 L15.5 1.5" fill="none" stroke="#555" stroke-width="2.2"/></svg>
<div class="b" style="left:601px;top:974.0px;width:1158px;height:2px;background:#ececec"></div>
<div class="t m" style="left:614.5px;top:947.1px;font-size:15.3px;color:#4f4f4f;font-weight:400;">12</div>
<div class="t m" style="left:655.5px;top:947.1px;font-size:15.3px;color:#4f4f4f;font-weight:400;">eth_estimateGas</div>
<div class="t m" style="left:922.0px;top:947.1px;font-size:15.3px;color:#4f4f4f;font-weight:400;">Production Fronte…</div>
<div class="t m" style="left:1102.0px;top:947.1px;font-size:15.3px;color:#dd6a5c;font-weight:400;">-32000</div>
<svg class="b" style="left:1166px;top:945.3px" width="16" height="16" viewBox="0 0 16 16"><path d="M6.5 2 H1.9 V13.9 H12.8 V9.2" fill="none" stroke="#8a8a8a" stroke-width="1.9"/><path d="M5.8 9.6 L12.2 3" stroke="#8a8a8a" stroke-width="1.9" stroke-linecap="round"/><path d="M9.6 0.3 H15.2 V5.9 Z" fill="#8a8a8a"/></svg>
<div class="t m" style="left:1231.0px;top:947.1px;font-size:15.3px;color:#6ccba5;font-weight:400;">200</div>
<div class="t m" style="left:1308.0px;top:947.1px;font-size:15.3px;color:#6ccba5;font-weight:400;">71ms</div>
<div class="t m" style="left:1462.0px;top:947.1px;font-size:15.3px;color:#4f4f4f;font-weight:400;">6h ago</div>
<div class="t m" style="left:1566.0px;top:947.1px;font-size:15.3px;color:#4f4f4f;font-weight:400;">Mainnet</div>
<div class="b" style="left:1669px;top:938px;width:44px;height:31px;background:#edf0f1;border-radius:5px"></div><svg class="b" style="left:1683.5px;top:950px" width="16" height="6" viewBox="0 0 16 6"><circle cx="2.6" cy="3" r="2.1" fill="#2a2a2a"/><circle cx="7.8" cy="3" r="2.1" fill="#2a2a2a"/><circle cx="13" cy="3" r="2.1" fill="#2a2a2a"/></svg>
<svg class="b" style="left:1732px;top:947.8px" width="17" height="11" viewBox="0 0 17 11"><path d="M1.5 1.5 L8.5 9 L15.5 1.5" fill="none" stroke="#555" stroke-width="2.2"/></svg>
<div class="b" style="left:601px;top:1016.7px;width:1158px;height:2px;background:#ececec"></div>
<div class="t m" style="left:614.5px;top:989.9px;font-size:15.3px;color:#4f4f4f;font-weight:400;">13</div>
<div class="t m" style="left:655.5px;top:989.9px;font-size:15.3px;color:#4f4f4f;font-weight:400;">eth_estimateGas</div>
<div class="t m" style="left:922.0px;top:989.9px;font-size:15.3px;color:#4f4f4f;font-weight:400;">Production Fronte…</div>
<div class="t m" style="left:1102.0px;top:989.9px;font-size:15.3px;color:#dd6a5c;font-weight:400;">-32000</div>
<svg class="b" style="left:1166px;top:988.08px" width="16" height="16" viewBox="0 0 16 16"><path d="M6.5 2 H1.9 V13.9 H12.8 V9.2" fill="none" stroke="#8a8a8a" stroke-width="1.9"/><path d="M5.8 9.6 L12.2 3" stroke="#8a8a8a" stroke-width="1.9" stroke-linecap="round"/><path d="M9.6 0.3 H15.2 V5.9 Z" fill="#8a8a8a"/></svg>
<div class="t m" style="left:1231.0px;top:989.9px;font-size:15.3px;color:#6ccba5;font-weight:400;">200</div>
<div class="t m" style="left:1308.0px;top:989.9px;font-size:15.3px;color:#6ccba5;font-weight:400;">36ms</div>
<div class="t m" style="left:1462.0px;top:989.9px;font-size:15.3px;color:#4f4f4f;font-weight:400;">15h ago</div>
<div class="t m" style="left:1566.0px;top:989.9px;font-size:15.3px;color:#4f4f4f;font-weight:400;">Mainnet</div>
<div class="b" style="left:1669px;top:981px;width:44px;height:31px;background:#edf0f1;border-radius:5px"></div><svg class="b" style="left:1683.5px;top:993px" width="16" height="6" viewBox="0 0 16 6"><circle cx="2.6" cy="3" r="2.1" fill="#2a2a2a"/><circle cx="7.8" cy="3" r="2.1" fill="#2a2a2a"/><circle cx="13" cy="3" r="2.1" fill="#2a2a2a"/></svg>
<svg class="b" style="left:1732px;top:990.58px" width="17" height="11" viewBox="0 0 17 11"><path d="M1.5 1.5 L8.5 9 L15.5 1.5" fill="none" stroke="#555" stroke-width="2.2"/></svg>
<div class="b" style="left:601px;top:1059.5px;width:1158px;height:2px;background:#ececec"></div>
<div class="t m" style="left:614.5px;top:1032.6px;font-size:15.3px;color:#4f4f4f;font-weight:400;">14</div>
<div class="t m" style="left:655.5px;top:1032.6px;font-size:15.3px;color:#4f4f4f;font-weight:400;">eth_estimateGas</div>
<div class="t m" style="left:922.0px;top:1032.6px;font-size:15.3px;color:#4f4f4f;font-weight:400;">Production Fronte…</div>
<div class="t m" style="left:1102.0px;top:1032.6px;font-size:15.3px;color:#dd6a5c;font-weight:400;">-32000</div>
<svg class="b" style="left:1166px;top:1030.8600000000001px" width="16" height="16" viewBox="0 0 16 16"><path d="M6.5 2 H1.9 V13.9 H12.8 V9.2" fill="none" stroke="#8a8a8a" stroke-width="1.9"/><path d="M5.8 9.6 L12.2 3" stroke="#8a8a8a" stroke-width="1.9" stroke-linecap="round"/><path d="M9.6 0.3 H15.2 V5.9 Z" fill="#8a8a8a"/></svg>
<div class="t m" style="left:1231.0px;top:1032.6px;font-size:15.3px;color:#6ccba5;font-weight:400;">200</div>
<div class="t m" style="left:1308.0px;top:1032.6px;font-size:15.3px;color:#6ccba5;font-weight:400;">38ms</div>
<div class="t m" style="left:1462.0px;top:1032.6px;font-size:15.3px;color:#4f4f4f;font-weight:400;">15h ago</div>
<div class="t m" style="left:1566.0px;top:1032.6px;font-size:15.3px;color:#4f4f4f;font-weight:400;">Mainnet</div>
<div class="b" style="left:1669px;top:1024px;width:44px;height:31px;background:#edf0f1;border-radius:5px"></div><svg class="b" style="left:1683.5px;top:1036px" width="16" height="6" viewBox="0 0 16 6"><circle cx="2.6" cy="3" r="2.1" fill="#2a2a2a"/><circle cx="7.8" cy="3" r="2.1" fill="#2a2a2a"/><circle cx="13" cy="3" r="2.1" fill="#2a2a2a"/></svg>
<svg class="b" style="left:1732px;top:1033.3600000000001px" width="17" height="11" viewBox="0 0 17 11"><path d="M1.5 1.5 L8.5 9 L15.5 1.5" fill="none" stroke="#555" stroke-width="2.2"/></svg>
<div class="b" style="left:601px;top:1102.2px;width:1158px;height:2px;background:#ececec"></div>
<div class="t m" style="left:614.5px;top:1075.4px;font-size:15.3px;color:#4f4f4f;font-weight:400;">15</div>
<div class="t m" style="left:655.5px;top:1075.4px;font-size:15.3px;color:#4f4f4f;font-weight:400;">eth_estimateGas</div>
<div class="t m" style="left:922.0px;top:1075.4px;font-size:15.3px;color:#4f4f4f;font-weight:400;">Production Fronte…</div>
<div class="t m" style="left:1102.0px;top:1075.4px;font-size:15.3px;color:#dd6a5c;font-weight:400;">-32000</div>
<svg class="b" style="left:1166px;top:1073.6399999999999px" width="16" height="16" viewBox="0 0 16 16"><path d="M6.5 2 H1.9 V13.9 H12.8 V9.2" fill="none" stroke="#8a8a8a" stroke-width="1.9"/><path d="M5.8 9.6 L12.2 3" stroke="#8a8a8a" stroke-width="1.9" stroke-linecap="round"/><path d="M9.6 0.3 H15.2 V5.9 Z" fill="#8a8a8a"/></svg>
<div class="t m" style="left:1231.0px;top:1075.4px;font-size:15.3px;color:#6ccba5;font-weight:400;">200</div>
<div class="t m" style="left:1308.0px;top:1075.4px;font-size:15.3px;color:#6ccba5;font-weight:400;">35ms</div>
<div class="t m" style="left:1462.0px;top:1075.4px;font-size:15.3px;color:#4f4f4f;font-weight:400;">15h ago</div>
<div class="t m" style="left:1566.0px;top:1075.4px;font-size:15.3px;color:#4f4f4f;font-weight:400;">Mainnet</div>
<div class="b" style="left:1669px;top:1066px;width:44px;height:31px;background:#edf0f1;border-radius:5px"></div><svg class="b" style="left:1683.5px;top:1078px" width="16" height="6" viewBox="0 0 16 6"><circle cx="2.6" cy="3" r="2.1" fill="#2a2a2a"/><circle cx="7.8" cy="3" r="2.1" fill="#2a2a2a"/><circle cx="13" cy="3" r="2.1" fill="#2a2a2a"/></svg>
<svg class="b" style="left:1732px;top:1076.1399999999999px" width="17" height="11" viewBox="0 0 17 11"><path d="M1.5 1.5 L8.5 9 L15.5 1.5" fill="none" stroke="#555" stroke-width="2.2"/></svg>
<div class="b" style="left:601px;top:1145.0px;width:1158px;height:2px;background:#ececec"></div>
<div class="t m" style="left:614.5px;top:1118.2px;font-size:15.3px;color:#4f4f4f;font-weight:400;">16</div>
<div class="t m" style="left:655.5px;top:1118.2px;font-size:15.3px;color:#4f4f4f;font-weight:400;">eth_estimateGas</div>
<div class="t m" style="left:922.0px;top:1118.2px;font-size:15.3px;color:#4f4f4f;font-weight:400;">Production Fronte…</div>
<div class="t m" style="left:1102.0px;top:1118.2px;font-size:15.3px;color:#dd6a5c;font-weight:400;">-32000</div>
<svg class="b" style="left:1166px;top:1116.42px" width="16" height="16" viewBox="0 0 16 16"><path d="M6.5 2 H1.9 V13.9 H12.8 V9.2" fill="none" stroke="#8a8a8a" stroke-width="1.9"/><path d="M5.8 9.6 L12.2 3" stroke="#8a8a8a" stroke-width="1.9" stroke-linecap="round"/><path d="M9.6 0.3 H15.2 V5.9 Z" fill="#8a8a8a"/></svg>
<div class="t m" style="left:1231.0px;top:1118.2px;font-size:15.3px;color:#6ccba5;font-weight:400;">200</div>
<div class="t m" style="left:1308.0px;top:1118.2px;font-size:15.3px;color:#6ccba5;font-weight:400;">39ms</div>
<div class="t m" style="left:1462.0px;top:1118.2px;font-size:15.3px;color:#4f4f4f;font-weight:400;">15h ago</div>
<div class="t m" style="left:1566.0px;top:1118.2px;font-size:15.3px;color:#4f4f4f;font-weight:400;">Mainnet</div>
<div class="b" style="left:1669px;top:1109px;width:44px;height:31px;background:#edf0f1;border-radius:5px"></div><svg class="b" style="left:1683.5px;top:1121px" width="16" height="6" viewBox="0 0 16 6"><circle cx="2.6" cy="3" r="2.1" fill="#2a2a2a"/><circle cx="7.8" cy="3" r="2.1" fill="#2a2a2a"/><circle cx="13" cy="3" r="2.1" fill="#2a2a2a"/></svg>
<svg class="b" style="left:1732px;top:1118.92px" width="17" height="11" viewBox="0 0 17 11"><path d="M1.5 1.5 L8.5 9 L15.5 1.5" fill="none" stroke="#555" stroke-width="2.2"/></svg>
<div class="b" style="left:601px;top:1187.8px;width:1158px;height:2px;background:#ececec"></div>
<div class="t m" style="left:614.5px;top:1161.0px;font-size:15.3px;color:#4f4f4f;font-weight:400;">17</div>
<div class="t m" style="left:655.5px;top:1161.0px;font-size:15.3px;color:#4f4f4f;font-weight:400;">eth_estimateGas</div>
<div class="t m" style="left:922.0px;top:1161.0px;font-size:15.3px;color:#4f4f4f;font-weight:400;">Production Fronte…</div>
<div class="t m" style="left:1102.0px;top:1161.0px;font-size:15.3px;color:#dd6a5c;font-weight:400;">-32000</div>
<svg class="b" style="left:1166px;top:1159.2px" width="16" height="16" viewBox="0 0 16 16"><path d="M6.5 2 H1.9 V13.9 H12.8 V9.2" fill="none" stroke="#8a8a8a" stroke-width="1.9"/><path d="M5.8 9.6 L12.2 3" stroke="#8a8a8a" stroke-width="1.9" stroke-linecap="round"/><path d="M9.6 0.3 H15.2 V5.9 Z" fill="#8a8a8a"/></svg>
<div class="t m" style="left:1231.0px;top:1161.0px;font-size:15.3px;color:#6ccba5;font-weight:400;">200</div>
<div class="t m" style="left:1308.0px;top:1161.0px;font-size:15.3px;color:#6ccba5;font-weight:400;">23ms</div>
<div class="t m" style="left:1462.0px;top:1161.0px;font-size:15.3px;color:#4f4f4f;font-weight:400;">19h ago</div>
<div class="t m" style="left:1566.0px;top:1161.0px;font-size:15.3px;color:#4f4f4f;font-weight:400;">Mainnet</div>
<div class="b" style="left:1669px;top:1152px;width:44px;height:31px;background:#edf0f1;border-radius:5px"></div><svg class="b" style="left:1683.5px;top:1164px" width="16" height="6" viewBox="0 0 16 6"><circle cx="2.6" cy="3" r="2.1" fill="#2a2a2a"/><circle cx="7.8" cy="3" r="2.1" fill="#2a2a2a"/><circle cx="13" cy="3" r="2.1" fill="#2a2a2a"/></svg>
<svg class="b" style="left:1732px;top:1161.7px" width="17" height="11" viewBox="0 0 17 11"><path d="M1.5 1.5 L8.5 9 L15.5 1.5" fill="none" stroke="#555" stroke-width="2.2"/></svg>
<div class="b" style="left:601px;top:1230.5px;width:1158px;height:2px;background:#ececec"></div>
<div class="t m" style="left:614.5px;top:1203.8px;font-size:15.3px;color:#4f4f4f;font-weight:400;">18</div>
<div class="t m" style="left:655.5px;top:1203.8px;font-size:15.3px;color:#4f4f4f;font-weight:400;">eth_estimateGas</div>
<div class="t m" style="left:922.0px;top:1203.8px;font-size:15.3px;color:#4f4f4f;font-weight:400;">Production Fronte…</div>
<div class="t m" style="left:1102.0px;top:1203.8px;font-size:15.3px;color:#dd6a5c;font-weight:400;">-32000</div>
<svg class="b" style="left:1166px;top:1201.98px" width="16" height="16" viewBox="0 0 16 16"><path d="M6.5 2 H1.9 V13.9 H12.8 V9.2" fill="none" stroke="#8a8a8a" stroke-width="1.9"/><path d="M5.8 9.6 L12.2 3" stroke="#8a8a8a" stroke-width="1.9" stroke-linecap="round"/><path d="M9.6 0.3 H15.2 V5.9 Z" fill="#8a8a8a"/></svg>
<div class="t m" style="left:1231.0px;top:1203.8px;font-size:15.3px;color:#6ccba5;font-weight:400;">200</div>
<div class="t m" style="left:1308.0px;top:1203.8px;font-size:15.3px;color:#6ccba5;font-weight:400;">24ms</div>
<div class="t m" style="left:1462.0px;top:1203.8px;font-size:15.3px;color:#4f4f4f;font-weight:400;">19h ago</div>
<div class="t m" style="left:1566.0px;top:1203.8px;font-size:15.3px;color:#4f4f4f;font-weight:400;">Mainnet</div>
<div class="b" style="left:1669px;top:1195px;width:44px;height:31px;background:#edf0f1;border-radius:5px"></div><svg class="b" style="left:1683.5px;top:1207px" width="16" height="6" viewBox="0 0 16 6"><circle cx="2.6" cy="3" r="2.1" fill="#2a2a2a"/><circle cx="7.8" cy="3" r="2.1" fill="#2a2a2a"/><circle cx="13" cy="3" r="2.1" fill="#2a2a2a"/></svg>
<svg class="b" style="left:1732px;top:1204.48px" width="17" height="11" viewBox="0 0 17 11"><path d="M1.5 1.5 L8.5 9 L15.5 1.5" fill="none" stroke="#555" stroke-width="2.2"/></svg>
<div class="b" style="left:601px;top:1273.3px;width:1158px;height:2px;background:#ececec"></div>
<div class="t m" style="left:614.5px;top:1246.5px;font-size:15.3px;color:#4f4f4f;font-weight:400;">19</div>
<div class="t m" style="left:655.5px;top:1246.5px;font-size:15.3px;color:#4f4f4f;font-weight:400;">eth_estimateGas</div>
<div class="t m" style="left:922.0px;top:1246.5px;font-size:15.3px;color:#4f4f4f;font-weight:400;">Production Fronte…</div>
<div class="t m" style="left:1102.0px;top:1246.5px;font-size:15.3px;color:#dd6a5c;font-weight:400;">-32000</div>
<svg class="b" style="left:1166px;top:1244.76px" width="16" height="16" viewBox="0 0 16 16"><path d="M6.5 2 H1.9 V13.9 H12.8 V9.2" fill="none" stroke="#8a8a8a" stroke-width="1.9"/><path d="M5.8 9.6 L12.2 3" stroke="#8a8a8a" stroke-width="1.9" stroke-linecap="round"/><path d="M9.6 0.3 H15.2 V5.9 Z" fill="#8a8a8a"/></svg>
<div class="t m" style="left:1231.0px;top:1246.5px;font-size:15.3px;color:#6ccba5;font-weight:400;">200</div>
<div class="t m" style="left:1308.0px;top:1246.5px;font-size:15.3px;color:#6ccba5;font-weight:400;">39ms</div>
<div class="t m" style="left:1462.0px;top:1246.5px;font-size:15.3px;color:#4f4f4f;font-weight:400;">19h ago</div>
<div class="t m" style="left:1566.0px;top:1246.5px;font-size:15.3px;color:#4f4f4f;font-weight:400;">Mainnet</div>
<div class="b" style="left:1669px;top:1238px;width:44px;height:31px;background:#edf0f1;border-radius:5px"></div><svg class="b" style="left:1683.5px;top:1250px" width="16" height="6" viewBox="0 0 16 6"><circle cx="2.6" cy="3" r="2.1" fill="#2a2a2a"/><circle cx="7.8" cy="3" r="2.1" fill="#2a2a2a"/><circle cx="13" cy="3" r="2.1" fill="#2a2a2a"/></svg>
<svg class="b" style="left:1732px;top:1247.26px" width="17" height="11" viewBox="0 0 17 11"><path d="M1.5 1.5 L8.5 9 L15.5 1.5" fill="none" stroke="#555" stroke-width="2.2"/></svg>
<div class="t m" style="left:614.5px;top:1289.3px;font-size:15.3px;color:#4f4f4f;font-weight:400;">20</div>
<div class="t m" style="left:655.5px;top:1289.3px;font-size:15.3px;color:#4f4f4f;font-weight:400;">eth_estimateGas</div>
<div class="t m" style="left:922.0px;top:1289.3px;font-size:15.3px;color:#4f4f4f;font-weight:400;">Production Fronte…</div>
<div class="t m" style="left:1102.0px;top:1289.3px;font-size:15.3px;color:#dd6a5c;font-weight:400;">-32000</div>
<svg class="b" style="left:1166px;top:1287.54px" width="16" height="16" viewBox="0 0 16 16"><path d="M6.5 2 H1.9 V13.9 H12.8 V9.2" fill="none" stroke="#8a8a8a" stroke-width="1.9"/><path d="M5.8 9.6 L12.2 3" stroke="#8a8a8a" stroke-width="1.9" stroke-linecap="round"/><path d="M9.6 0.3 H15.2 V5.9 Z" fill="#8a8a8a"/></svg>
<div class="t m" style="left:1231.0px;top:1289.3px;font-size:15.3px;color:#6ccba5;font-weight:400;">200</div>
<div class="t m" style="left:1308.0px;top:1289.3px;font-size:15.3px;color:#6ccba5;font-weight:400;">30ms</div>
<div class="t m" style="left:1462.0px;top:1289.3px;font-size:15.3px;color:#4f4f4f;font-weight:400;">19h ago</div>
<div class="t m" style="left:1566.0px;top:1289.3px;font-size:15.3px;color:#4f4f4f;font-weight:400;">Mainnet</div>
<div class="b" style="left:1669px;top:1280px;width:44px;height:31px;background:#edf0f1;border-radius:5px"></div><svg class="b" style="left:1683.5px;top:1292px" width="16" height="6" viewBox="0 0 16 6"><circle cx="2.6" cy="3" r="2.1" fill="#2a2a2a"/><circle cx="7.8" cy="3" r="2.1" fill="#2a2a2a"/><circle cx="13" cy="3" r="2.1" fill="#2a2a2a"/></svg>
<svg class="b" style="left:1732px;top:1290.04px" width="17" height="11" viewBox="0 0 17 11"><path d="M1.5 1.5 L8.5 9 L15.5 1.5" fill="none" stroke="#555" stroke-width="2.2"/></svg>
<div class="b" style="left:601px;top:258px;width:1158px;height:239px;background:#f3f4f4;border:1.5px solid #e2e4e4;border-radius:6px;box-sizing:border-box"></div>
<div class="b" style="left:603px;top:260px;width:1154px;height:40px;background:#f7f7f7;border-radius:5px 5px 0 0"></div>
<div class="t m" style="left:616.5px;top:274.8px;font-size:15.3px;color:#4f4f4f;font-weight:400;">1</div>
<div class="t m" style="left:657.0px;top:274.8px;font-size:15.3px;color:#4f4f4f;font-weight:400;">eth_estimateGas</div>
<div class="t m" style="left:919.0px;top:274.8px;font-size:15.3px;color:#4f4f4f;font-weight:400;">Production Fronte…</div>
<div class="t m" style="left:1099.0px;top:274.8px;font-size:15.3px;color:#dd6a5c;font-weight:400;">-32000</div>
<svg class="b" style="left:1164px;top:273px" width="16" height="16" viewBox="0 0 16 16"><path d="M6.5 2 H1.9 V13.9 H12.8 V9.2" fill="none" stroke="#8a8a8a" stroke-width="1.9"/><path d="M5.8 9.6 L12.2 3" stroke="#8a8a8a" stroke-width="1.9" stroke-linecap="round"/><path d="M9.6 0.3 H15.2 V5.9 Z" fill="#8a8a8a"/></svg>
<div class="t m" style="left:1228.0px;top:274.8px;font-size:15.3px;color:#6ccba5;font-weight:400;">200</div>
<div class="t m" style="left:1305.0px;top:274.8px;font-size:15.3px;color:#6ccba5;font-weight:400;">32ms</div>
<div class="t m" style="left:1460.0px;top:274.8px;font-size:15.3px;color:#4f4f4f;font-weight:400;">6h ago</div>
<div class="t m" style="left:1563.0px;top:274.8px;font-size:15.3px;color:#4f4f4f;font-weight:400;">Mainnet</div>
<div class="b" style="left:1667px;top:265px;width:44px;height:31px;background:#eff1f1;border-radius:5px"></div><svg class="b" style="left:1681.5px;top:277px" width="16" height="6" viewBox="0 0 16 6"><circle cx="2.6" cy="3" r="2.1" fill="#2a2a2a"/><circle cx="7.8" cy="3" r="2.1" fill="#2a2a2a"/><circle cx="13" cy="3" r="2.1" fill="#2a2a2a"/></svg>
<svg class="b" style="left:1730px;top:274px" width="17" height="11" viewBox="0 0 17 11"><path d="M1.5 9 L8.5 1.5 L15.5 9" fill="none" stroke="#555" stroke-width="2.2"/></svg>
<div class="b" style="left:616px;top:301px;width:1126px;height:180px;background:#fff;border:1.5px solid #e6e7e7;box-sizing:border-box;border-radius:2px"></div>
<div class="b" style="left:1178px;top:304px;width:3px;height:175px;background:#dcdcdc"></div>
<div class="t m" style="left:631.0px;top:316.3px;font-size:15.3px;color:#6b8be2;font-weight:400;">PARAMS</div>
<div class="t m" style="left:702.0px;top:316.3px;font-size:15.3px;color:#777;font-weight:400;">RAW REQUEST</div>
<div class="b" style="left:631px;top:335.5px;width:55px;height:2.5px;background:#6f8fe6;border-radius:1px"></div>
<svg class="b" style="left:1108px;top:317px" width="17" height="18" viewBox="0 0 17 18"><rect x="0.5" y="4" width="3" height="13.5" fill="#5a6aa8"/><rect x="0.5" y="15" width="11" height="2.5" fill="#5a6aa8"/><path d="M5 0.5 H11.5 L16 5 V14.5 H5 Z" fill="#5a6aa8"/></svg>
<div class="t s" style="left:1132.0px;top:319.8px;font-size:12px;color:#555;font-weight:700;">COPY</div>
<div class="t s" style="left:634.0px;top:354.6px;font-size:14.6px;color:#9a9a9a;font-weight:400;">Data:</div>
<div class="t s" style="left:634.0px;top:378.6px;font-size:14.6px;color:#9a9a9a;font-weight:400;">From:</div>
<div class="t s" style="left:634.0px;top:403.1px;font-size:14.6px;color:#9a9a9a;font-weight:400;">Gas Price:</div>
<div class="t s" style="left:634.0px;top:426.6px;font-size:14.6px;color:#9a9a9a;font-weight:400;">To:</div>
<div class="t s" style="left:634.0px;top:452.1px;font-size:14.6px;color:#9a9a9a;font-weight:400;">Value:</div>
<div class="t m" style="left:714.0px;top:355.3px;font-size:15.3px;color:#4a4a4a;font-weight:400;">3504541104</div>
<div class="t m" style="left:714.0px;top:379.3px;font-size:15.3px;color:#6384d6;font-weight:400;">0xef8010c89fcc73e83d51a0a2bf880cbdeba0cade</div>
<div class="t m" style="left:714.0px;top:403.8px;font-size:15.3px;color:#4a4a4a;font-weight:400;">2.59150000e+11</div>
<div class="b" style="left:714px;top:423px;width:58px;height:23px;background:#b440d8;border-radius:12px"></div>
<div class="t s" style="left:724.5px;top:429.2px;font-size:11.6px;color:#fff;font-weight:700;">TOKEN</div>
<div class="b" style="left:779px;top:427.3px;width:396px;overflow:hidden;white-space:nowrap;font-family:'Liberation Mono',monospace;font-size:15.3px;color:#6384d6;line-height:1">WETH (0xc02aaa39b223fe8d0a0e5c4f27ead9083c756cc2)</div>
<div class="t m" style="left:714.0px;top:452.8px;font-size:15.3px;color:#4a4a4a;font-weight:400;">2.19972000e+17</div>
<div class="t m" style="left:1194.0px;top:316.8px;font-size:15.3px;color:#6b8be2;font-weight:400;">ERROR</div>
<div class="t m" style="left:1256.0px;top:316.8px;font-size:15.3px;color:#777;font-weight:400;">RAW RESPONSE</div>
<div class="b" style="left:1194px;top:335.5px;width:46px;height:2.5px;background:#6f8fe6;border-radius:1px"></div>
<svg class="b" style="left:1672px;top:317px" width="17" height="18" viewBox="0 0 17 18"><rect x="0.5" y="4" width="3" height="13.5" fill="#5a6aa8"/><rect x="0.5" y="15" width="11" height="2.5" fill="#5a6aa8"/><path d="M5 0.5 H11.5 L16 5 V14.5 H5 Z" fill="#5a6aa8"/></svg>
<div class="t s" style="left:1695.0px;top:319.8px;font-size:12px;color:#555;font-weight:700;">COPY</div>
<div class="t s" style="left:1197.0px;top:355.0px;font-size:14.6px;color:#9a9a9a;font-weight:400;">Code:</div>
<div class="t s" style="left:1197.0px;top:378.6px;font-size:14.6px;color:#9a9a9a;font-weight:400;">Message:</div>
<div class="t m" style="left:1273.5px;top:355.7px;font-size:15.3px;color:#dd6a5c;font-weight:400;">-32000</div>
<svg class="b" style="left:1338px;top:354px" width="16" height="16" viewBox="0 0 16 16"><path d="M6.5 2 H1.9 V13.9 H12.8 V9.2" fill="none" stroke="#8a8a8a" stroke-width="1.9"/><path d="M5.8 9.6 L12.2 3" stroke="#8a8a8a" stroke-width="1.9" stroke-linecap="round"/><path d="M9.6 0.3 H15.2 V5.9 Z" fill="#8a8a8a"/></svg>
<div class="t m" style="left:1273.5px;top:379.3px;font-size:15.3px;color:#dd6a5c;font-weight:400;">gas required exceeds allowance (0)</div>
<div class="b" style="left:1106px;top:1341px;width:38px;height:38px;background:#2196f3;border-radius:6px;box-shadow:0 0 0 2px rgba(180,230,255,0.6)"></div>
<div class="t s" style="left:1120.0px;top:1350.6px;font-size:17px;color:#fff;font-weight:400;">1</div>
<div class="b" style="left:1158px;top:1341px;width:36px;height:38px;background:#eaecec;border-radius:4px"></div>
<div class="t s" style="left:1171.0px;top:1350.6px;font-size:17px;color:#222;font-weight:400;">2</div>
<div class="b" style="left:1209px;top:1341px;width:36px;height:38px;background:#eaecec;border-radius:4px"></div>
<div class="t s" style="left:1222.0px;top:1350.6px;font-size:17px;color:#222;font-weight:400;">3</div>
<div class="b" style="left:1848px;top:1364px;width:229px;height:50px;background:#3e7ef5;border-radius:25px;box-shadow:0 2px 4px rgba(0,0,0,0.1)"></div>
<div class="t s" style="left:1868.0px;top:1380.9px;font-size:15.5px;color:#fff;font-weight:700;">Chat with VIP Support</div>
<svg class="b" style="left:2038px;top:1380px" width="22" height="18" viewBox="0 0 22 18"><path d="M0 8 L22 0 L17 18 L10 12 L18 3 L8 11 Z" fill="#fff"/></svg>
<svg class="b" style="left:0;top:1430px" width="10" height="10" viewBox="0 0 10 10"><path d="M0 2 A8 8 0 0 0 8 10 L0 10 Z" fill="#18262b"/></svg>
<svg class="b" style="left:2090px;top:1430px" width="10" height="10" viewBox="0 0 10 10"><path d="M10 2 A8 8 0 0 1 2 10 L10 10 Z" fill="#9a9a9a"/></svg>
<svg class="b" style="left:1096px;top:502px" width="16" height="24" viewBox="0 0 16 24"><path d="M1 1 L1 19 L5.5 15 L9 23 L12 21.5 L8.5 14 L14 14 Z" fill="#111" stroke="#fff" stroke-width="1"/></svg>
</body></html>
